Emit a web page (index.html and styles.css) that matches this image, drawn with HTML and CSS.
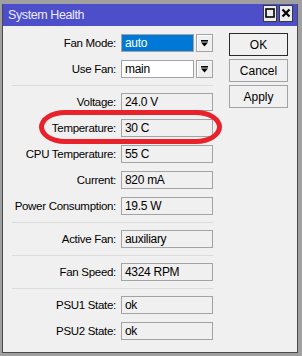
FILE: index.html
```html
<!DOCTYPE html>
<html lang="en">
<head>
    <meta charset="UTF-8">
    <meta name="viewport" content="width=device-width, initial-scale=1.0">
    <title>System Health</title>
    <link rel="stylesheet" href="styles.css">
</head>
<body>
    <div class="window">
        <div class="titlebar">
            <span class="title">System Health</span>
            <div class="title-buttons">
                <span class="tbtn">
                    <svg width="10" height="10" viewBox="0 0 10 10"><rect x="1" y="1" width="8" height="8" fill="none" stroke="#000" stroke-width="1.6"/></svg>
                </span>
                <span class="tbtn">
                    <svg width="10" height="10" viewBox="0 0 10 10"><path d="M1.5 1.5 L8.5 8.5 M8.5 1.5 L1.5 8.5" stroke="#000" stroke-width="2.2"/></svg>
                </span>
            </div>
        </div>

        <div class="content">
            <div class="form">
                <div class="row">
                    <span class="label">Fan Mode:</span>
                    <div class="combo">
                        <span class="select selected">auto</span>
                        <span class="drop"><svg width="9" height="9" viewBox="0 0 9 9"><rect x="1" y="1" width="7" height="1.6" fill="#000"/><path d="M1 3.5 H8 L4.5 7.5 Z" fill="#000"/></svg></span>
                    </div>
                </div>
                <div class="row">
                    <span class="label">Use Fan:</span>
                    <div class="combo">
                        <span class="select">main</span>
                        <span class="drop"><svg width="9" height="9" viewBox="0 0 9 9"><rect x="1" y="1" width="7" height="1.6" fill="#000"/><path d="M1 3.5 H8 L4.5 7.5 Z" fill="#000"/></svg></span>
                    </div>
                </div>

                <div class="sep"></div>

                <div class="row"><span class="label">Voltage:</span><span class="field">24.0 V</span></div>
                <div class="row"><span class="label">Temperature:</span><span class="field">30 C</span></div>
                <div class="row"><span class="label">CPU Temperature:</span><span class="field">55 C</span></div>
                <div class="row"><span class="label">Current:</span><span class="field">820 mA</span></div>
                <div class="row"><span class="label">Power Consumption:</span><span class="field">19.5 W</span></div>

                <div class="sep"></div>

                <div class="row"><span class="label">Active Fan:</span><span class="field">auxiliary</span></div>

                <div class="sep"></div>

                <div class="row"><span class="label">Fan Speed:</span><span class="field">4324 RPM</span></div>

                <div class="sep"></div>

                <div class="row"><span class="label">PSU1 State:</span><span class="field">ok</span></div>
                <div class="row"><span class="label">PSU2 State:</span><span class="field">ok</span></div>
            </div>

            <div class="buttons">
                <span class="btn default">OK</span>
                <span class="btn">Cancel</span>
                <span class="btn">Apply</span>
            </div>
        </div>
    </div>

    <!-- red marker drawn over the Temperature row -->
    <div class="highlight"></div>
</body>
</html>
```

FILE: styles.css
```css
body {
    margin: 0;
    padding: 4px 4px 3px 2px;
    width: 302px;
    height: 356px;
    box-sizing: border-box;
    background: #a0a0a0;
    font-family: 'Liberation Sans', Arial, sans-serif;
    font-size: 11.5px;
    color: #000;
}
.window {
    height: 100%;
    box-sizing: border-box;
    background: #f0f0f0;
    border: 1px solid #4a4a4a;
    border-top: none;
}
.titlebar {
    height: 22px;
    background: #4c4fc9;
    display: flex;
    align-items: center;
    justify-content: space-between;
    padding: 0 4px 0 5px;
}
.title {
    color: #eceaff;
    font-size: 12.5px;
    letter-spacing: -0.4px;
}
.title-buttons {
    display: flex;
    gap: 2px;
    margin-top: -4px;
}
.tbtn {
    width: 14px;
    height: 17px;
    box-sizing: border-box;
    border: 1px solid #3a3a3a;
    background: #ececec;
    display: flex;
    align-items: center;
    justify-content: center;
}
.content {
    display: flex;
    padding: 8px 8px 0 9px;
    gap: 16px;
}
.form {
    display: flex;
    flex-direction: column;
    gap: 8px;
    width: 201px;
}
.row {
    display: flex;
    align-items: center;
    gap: 5px;
    height: 18px;
}
.label {
    width: 104px;
    text-align: right;
    white-space: nowrap;
    letter-spacing: -0.3px;
}
.field, .select {
    height: 18px;
    box-sizing: border-box;
    border: 1px solid #a3a3a3;
    padding: 0 0 0 3px;
    line-height: 16px;
    font-size: 12px;
    letter-spacing: -0.3px;
}
.field {
    width: 92px;
    background: #f0f0f0;
}
.combo {
    display: flex;
    gap: 2px;
}
.select {
    width: 73px;
    background: #fff;
}
.select.selected {
    background: #0078d7;
    color: #fff;
}
.drop {
    width: 17px;
    height: 18px;
    box-sizing: border-box;
    border: 1px solid #a3a3a3;
    box-shadow: inset 1px 1px 0 #fff;
    background: #efefef;
    display: flex;
    align-items: center;
    justify-content: center;
}
.sep {
    height: 1px;
    background: #dcdcdc;
    margin: -1px 0;
}
.buttons {
    display: flex;
    flex-direction: column;
    gap: 3px;
    margin-top: -1px;
}
.btn {
    width: 59px;
    height: 23px;
    box-sizing: border-box;
    border: 1px solid #a3a3a3;
    background: #f0f0f0;
    display: flex;
    align-items: center;
    justify-content: center;
    font-size: 12px;
}
.btn.default {
    border-color: #2a2a2a;
}
.highlight {
    position: absolute;
    left: 39px;
    top: 110px;
    width: 183px;
    height: 34px;
    box-sizing: border-box;
    border: 5px solid #e8212b;
    border-radius: 26px / 17px;
}
```
